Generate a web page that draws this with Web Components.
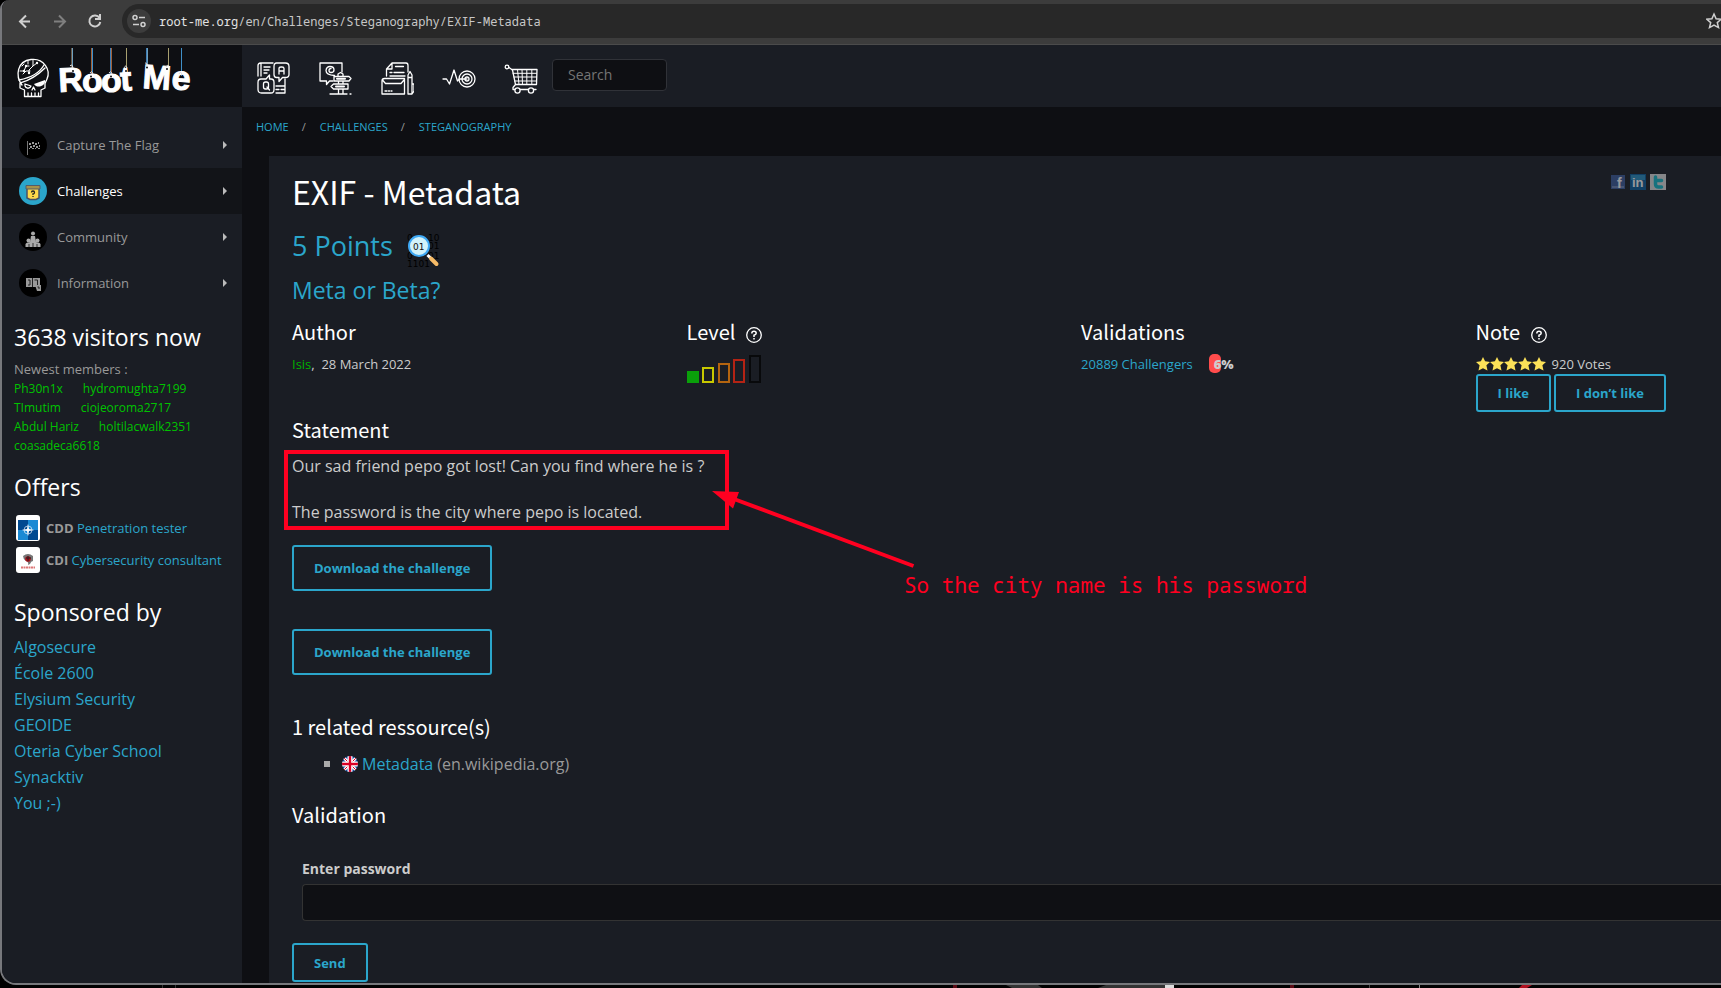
<!DOCTYPE html>
<html lang="en">
<head>
<meta charset="utf-8">
<title>EXIF - Metadata</title>
<style>
  html, body { margin: 0; background: #000; }
  body {
    font-family: "Open Sans", "Noto Sans", sans-serif;
    --link: #2ba6cb; --panel: #1a1d24; --deep: #0e0f13; --muted: #999; --text: #ccc; --green: #00c400;
    --heading-font: "Noto Sans CJK SC", "Open Sans", sans-serif;
    --mono: "Noto Sans Mono", "DejaVu Sans Mono", monospace;
  }
</style>
</head>
<body>
<desktop-window>
  <browser-bar slot="bar">root-me.org<span>/en/Challenges/Steganography/EXIF-Metadata</span></browser-bar>
  <site-logo slot="logo"></site-logo>
  <site-header slot="header"></site-header>
  <side-bar slot="side">
    <nav-item slot="nav" icon="flag">Capture The Flag</nav-item>
    <nav-item slot="nav" icon="chest" active>Challenges</nav-item>
    <nav-item slot="nav" icon="people">Community</nav-item>
    <nav-item slot="nav" icon="info">Information</nav-item>
  </side-bar>
  <crumb-trail></crumb-trail>
  <challenge-card></challenge-card>
</desktop-window>

<script>
const define = (name, html, setup) => {
  const tpl = document.createElement('template');
  tpl.innerHTML = html;
  customElements.define(name, class extends HTMLElement {
    constructor() {
      super();
      this.attachShadow({ mode: 'open' }).append(tpl.content.cloneNode(true));
    }
    connectedCallback() { if (setup) setup(this, this.shadowRoot); }
  });
};

/* Window frame, with the wallpaper showing below it */
define('desktop-window', `
<style>
  :host { display: flex; flex-direction: column; min-height: 100vh; overflow: hidden; }
  .frame { flex: 1; display: flex; flex-direction: column; overflow: hidden; box-sizing: border-box;
    border-left: 2px solid #77787c; border-bottom: 2px solid #77787c; border-radius: 9px 0 0 16px; background: var(--deep); }
  .page { flex: 1; display: grid; grid-template-columns: 240px minmax(0, 1fr); grid-template-rows: 62px 1fr; }
  main { min-width: 0; display: flex; flex-direction: column; }
  .wall { display: block; width: 100%; height: 3px; }
</style>
<div class="frame">
  <slot name="bar"></slot>
  <div class="page">
    <slot name="logo"></slot>
    <slot name="header"></slot>
    <slot name="side"></slot>
    <main><slot></slot></main>
  </div>
</div>
<svg class="wall" viewBox="0 0 1721 3" preserveAspectRatio="none" aria-hidden="true">
  <rect width="1721" height="3" fill="#000"/>
  <path d="M162 0h1v3h-1zM175 0h1v3h-1z" fill="#333"/>
  <path d="M953 0h4v3h-4zM1290 0h4v3h-4z" fill="#5a0a14"/>
  <path d="M1006 0h32l4 3h-30zM1106 0h59v3h-67z" fill="#333"/>
  <path d="M1165 0h9v3h-9z" fill="#ddd"/>
  <path d="M1369 0h1v3h-1z" fill="#444"/><path d="M1419 0h1v3h-1z" fill="#888"/>
  <path d="M1522 0h10l-5 3h-8z" fill="#b01020"/>
</svg>`);

define('browser-bar', `
<style>
  :host { display: flex; align-items: center; height: 44px; box-sizing: content-box; background: #3c3c3c; border-bottom: 1px solid #4b4b4b; padding-left: 11px; font: 12px/20px var(--mono); color: #e3e3e3; }
  nav { display: flex; gap: 11px; margin-right: 15px; }
  button { display: block; border: 0; background: none; padding: 0; width: 24px; height: 24px; }
  svg { display: block; fill: none; stroke: #d0d0d0; stroke-width: 2; }
  .dim { opacity: .45; }
  .pill { flex: 1; height: 34px; display: flex; align-items: center; gap: 8px; background: #282828; border-radius: 17px 0 0 17px; padding-left: 5px; margin-bottom: 2px; }
  .pill button { background: #3c3c3c; border-radius: 50%; }
  .url { flex: 1; padding-top: 1px; }
  ::slotted(span) { color: #c7c7c7; }
  .pill .star { background: none; border-radius: 0; width: 15px; overflow: hidden; }
</style>
<nav>
  <button aria-label="Back"><svg width="24" height="24" viewBox="0 0 24 22"><path d="M14 4.500L8 10.500l6 6M8 10.500H18" transform="translate(-1 0)"/></svg></button>
  <button aria-label="Forward" class="dim"><svg width="24" height="24" viewBox="0 0 24 22"><path d="M11 4.500l6 6-6 6M17 10.500H6"/></svg></button>
  <button aria-label="Reload"><svg width="24" height="24" viewBox="0 0 24 22"><path d="M16.500 7A5.500 5.500 0 1 0 17.300 11M17 3v5h-5"/></svg></button>
</nav>
<div class="pill">
  <button aria-label="Site information"><svg width="24" height="24" viewBox="0 0 24 24" style="stroke-width:1.500"><circle cx="8" cy="8.500" r="2"/><path d="M12 8.500h6M6 15.500h6"/><circle cx="16" cy="15.500" r="2"/></svg></button>
  <span class="url"><slot></slot></span>
  <button class="star" aria-label="Bookmark"><svg width="16" height="24" viewBox="0 0 16 24" style="stroke-width:1.500"><path d="M8 5l2.100 4.700 5.100.5-3.900 3.400 1.200 5L8 16l-4.500 2.600 1.200-5L.8 10.200l5.100-.5z"/></svg></button>
</div>`);

define('site-logo', `
<style>
  :host { display: block; background: #0e0f13; }
  a { display: block; } svg { display: block; }
</style>
<a href="#" aria-label="Root Me">
<svg width="240" height="62" viewBox="2 45 240 62">
  <g fill="none" stroke="#fff" stroke-width="1.300" stroke-linejoin="round" stroke-linecap="round">
    <path d="M22 85C15 76 17 61 31 59.500C44 58 51 70 47 79L45 83.500V88l-4 2v6.500H24.500V90L20 88V83C23 82 33 80 45 68"/>
    <path d="M19 80C29 78 39 74 44 65"/>
    <path d="M23 74l3-3h4M20 71h4l2-5h3M28 64v-3M33 60v6l-4 4v3M33 66l4-3M22 66l2-2" stroke-width="1"/>
    <path d="M28 96v-3M31.500 96v-3M35 96v-3M38.500 96v-3M32 90l1.500-3 1.500 3"/>
    <path d="M25 84l6 2c-1 3-5 3-6 0z"/>
  </g>
  <path d="M34 84l11-4c1 6-8 9-11 4z" fill="#fff"/>
  <g fill="#fff"><circle cx="26" cy="66" r="1.200"/><circle cx="29" cy="73" r="1.200"/><circle cx="24" cy="71" r="1.200"/><circle cx="37" cy="63" r="1.200"/></g>
  <g stroke-width="1">
    <path d="M72.500 48v22M147.500 48v20" stroke="#6fa0bd"/><path d="M92.500 48v28M181.500 48v28" stroke="#3f8fc8"/><path d="M91.500 48v28M111.500 48v28" stroke="#a06038"/><path d="M110.500 48v28M146.500 48v20" stroke="#3f7fb8"/>
    <path d="M126.500 48v22M168.500 48v20" stroke="#a8a070"/><path d="M71.500 48v20" stroke="#6a5848"/>
  </g>
  <text font-family="Liberation Sans, sans-serif" font-weight="700" font-size="34" fill="#fff" stroke="#fff" stroke-width="1" x="59 82 101 121 131 142 171" y="92 92 92 91 91 88 89" rotate="-3 0 0 -4 0 4 4">Root Me</text>
  <g fill="#0e0f13"><circle cx="73" cy="71" r="1"/><circle cx="91" cy="76.500" r="1"/><circle cx="111" cy="76.500" r="1"/><circle cx="126" cy="71" r="1"/><circle cx="147" cy="67.500" r="1"/><circle cx="167" cy="69" r="1"/></g>
  <g fill="none" stroke="#ddd"><path d="M70 66q2-3 3 2M90 73q2-3 3 1M109 73q2-3 3 1M124 68q2-4 3 0M145 63q2-1 2 3M166 67q1-3 3-1M179 74q2-4 3 1"/></g>
</svg></a>`);

define('site-header', `
<style>
  :host { display: flex; align-items: center; background: var(--panel); padding-left: 14px; }
  nav { display: flex; gap: 28px; }
  a { display: block; width: 34px; }
  svg { display: block; width: 34px; height: 34px; margin-top: 3px; fill: none; stroke: #fff; stroke-width: 1.300; stroke-linejoin: round; stroke-linecap: round; }
  input { width: 115px; height: 32px; box-sizing: border-box; margin: 14px 0 0 14px; padding: 0 15px 2px; border: 1px solid #303238; border-radius: 4px; background: var(--deep); color: var(--text); font: 14px "Open Sans", sans-serif; align-self: flex-start; }
  input::placeholder { color: #757575; opacity: 1; }
</style>
<nav>
  <a href="#" aria-label="Questions and answers"><svg viewBox="0 0 34 34">
    <path d="M2 15V4.500Q2 2 4.500 2H17M5 2v13M8 6h6M8 9h5M8 12h3M29 18v14M20 32h9M20 25h9M20 28.500h3M25 28.500h4"/>
    <path d="M20.500 2h9q3.500 0 3.500 3.500v8q0 3-3.500 3h-3L23 20.500v-4h-2.500q-2.500 0-2.500-3V5.500Q18 2 20.500 2z"/>
    <path d="M23 13V7.500Q23 6 25 6h1q2 0 2 1.500V13M23 10h5"/>
    <path d="M5 18h5l3.500-4V18H15q3 0 3 3.500v7q0 3.500-3 3.500H5.500Q2 32 2 28.500v-7Q2 18 5 18z"/>
    <rect x="7.500" y="21" width="5" height="7" rx="2"/><path d="M11 26l2.500 3"/></svg></a>
  <a href="#" aria-label="Guide"><svg viewBox="0 0 34 34">
    <path d="M15 20H11.500L8.500 23.500V20H2V2H24V11"/>
    <path d="M16.500 14.500Q8 14 8 9.500 8.500 5.500 12 5.500q4 0 4 3.500 0 2.500-3 2.500-2 0-2-2t2-2"/>
    <path d="M16 15.500h15l2 2-2 2.500H16zM30 23H15.500L13 25.500l2.500 2.500H30zM20 15v-2l2.500-1.500L25 13v2M20.500 20v3M25 20v3M20.500 28v5M25 28v5M12 33h17M32 33h1"/>
    <path d="M19 17.800h8M18 25.500h8" stroke-width="2"/></svg></a>
  <a href="#" aria-label="Documentation"><svg viewBox="0 0 34 34">
    <path d="M6.500 15V8L12 2h14q2 0 2 2.500V11M12 2v6H6.500M15.500 5.500h8M10 11.500h2M14 11.500h10M10 15h15"/>
    <path d="M24.500 17.500V33H2V20q0-2.500 2.500-2.500zM2.500 19l3 3.500h15.500l3-3.500M5 30h2M8.500 30h1M11 30h1"/>
    <path d="M28 14l2-3.500 2 3.500V33h-4zM28 16.500h4M32 23h2v7l-2 3"/></svg></a>
  <a href="#" aria-label="Monitoring"><svg viewBox="0 0 34 34">
    <path d="M1 18h3.500l3 5L12 9l3.500 11 2-2H25"/>
    <circle cx="25" cy="18" r="8"/><circle cx="25" cy="18" r="5"/><circle cx="25" cy="18" r="2"/></svg></a>
  <a href="#" aria-label="Shop"><svg viewBox="0 0 34 34">
    <circle cx="3" cy="6" r="1.800"/><path d="M5 6.500L8.500 9l3 14.500L9 26.500v2h23M7.500 8.500H33L32.500 23.500H11.500"/>
    <path d="M9 12.300h23.500M10 16h22.500M10.500 20h22M13.500 8.500l1.500 15M18 8.500l.5 15M22.800 8.500v15M27.800 8.500v15" stroke-width="1"/>
    <circle cx="13.500" cy="29.500" r="2.600" fill="#1a1d24"/><circle cx="27" cy="29.500" r="2.600" fill="#1a1d24"/></svg></a>
</nav>
<input type="search" placeholder="Search" aria-label="Search">`);

const navIcons = {
  flag: '<circle cx="14" cy="14" r="14" fill="#000"/><path d="M8.500 10v14" stroke="#777"/><g fill="#999"><path d="M10 12h2v2h-2zM13 11h2v2h-2zM16 12h2v2h-2zM19 11h1v2h-1zM11 15h2v2h-2zM14 14h2v2h-2zM17 15h2v2h-2zM20 14h1v2h-1zM10 17h1v1h-1zM13 17h2v1h-2zM16 17h1v1h-1zM19 17h2v1h-2z"/></g>',
  chest: '<circle cx="14" cy="14" r="14" fill="#2ba6cb"/><path d="M8 11h12v10l-3 1.500h-6L8 21z" fill="#ffd84a" stroke="#4a5266" stroke-width="1.500"/><path d="M7 8.500h14v3.500H7z" fill="#a8924a" stroke="#555c68"/><path d="M12.500 15.500q0-1.500 1.500-1.500t1.500 1.500-1.500 1.500v1M14 19v1" stroke="#222" stroke-width="1.300" fill="none"/>',
  people: '<circle cx="14" cy="14" r="14" fill="#000"/><g fill="#aaa"><circle cx="14" cy="10.500" r="2"/><path d="M12 13h4l1 6h-6z"/><circle cx="9.500" cy="17.500" r="2"/><circle cx="18.500" cy="17.500" r="2"/><path d="M6.500 21q1-2 3-1.500L14 18l4.500 1.500q2-.5 3 1.500v3h-15z"/></g><path d="M10 21v3M14 20v4M18 21v3" stroke="#333"/>',
  info: '<circle cx="14" cy="14" r="14" fill="#000"/><path d="M7 9h14v9H7z" fill="#999"/><path d="M16 16h6v6h-4z" fill="#999"/><path d="M9 11h2v5H9M13.500 9v9M15.500 11h3v5" stroke="#222" fill="none"/><path d="M18.500 18h1.500v2" stroke="#222" fill="none"/>'
};
define('nav-item', `
<style>
  :host { display: block; }
  :host([active]) { background: #121418; }
  a { display: flex; align-items: center; height: 46px; padding: 0 15px 0 17px; gap: 10px; font-size: 13px; color: #999; text-decoration: none; }
  :host([active]) a { color: #fff; }
  span { flex: 1; }
  .arrow { width: 4px; height: 8px; background: #bbb; clip-path: polygon(0 0, 100% 50%, 0 100%); }
</style>
<a href="#"><svg width="28" height="28" viewBox="0 0 28 28" aria-hidden="true"></svg><span><slot></slot></span><i class="arrow"></i></a>`,
(el, root) => { root.querySelector('svg').innerHTML = navIcons[el.getAttribute('icon')]; });

define('side-bar', `
<style>
  :host { display: block; background: var(--panel); padding-top: 15px; color: var(--muted); }
  section { padding: 0 12px; }
  h2 { margin: 15px 0 0; font: 23px/32px "Open Sans", sans-serif; color: #fff; }
  a { color: var(--link); text-decoration: none; }
  .new { margin: 7px 0 0; font-size: 13px; line-height: 19px; }
  .members { font-size: 12px; line-height: 19px; white-space: nowrap; }
  .members div { display: flex; gap: 20px; }
  .members a { color: var(--green); }
  .offer { display: flex; align-items: center; gap: 6px; height: 26px; margin: 0 0 6px 2px; font-size: 13px; white-space: nowrap; }
  .offers { margin-top: 12px; }
  .offer svg { background: #fff; border-radius: 3px; }
  .jobs h2 { margin-top: 16px; }
  .sponsors h2 { margin-top: 23px; }
  ul { list-style: none; margin: 6px 0 0; padding: 0; font-size: 16px; line-height: 26px; }
</style>
<nav aria-label="Main"><slot name="nav"></slot></nav>
<section>
  <h2>3638 visitors now</h2>
  <p class="new">Newest members :</p>
  <div class="members">
    <div><a href="#">Ph30n1x</a><a href="#">hydromughta7199</a></div>
    <div><a href="#">TImutim</a><a href="#">ciojeoroma2717</a></div>
    <div><a href="#">Abdul Hariz</a><a href="#">holtilacwalk2351</a></div>
    <div><a href="#">coasadeca6618</a></div>
  </div>
</section>
<section class="jobs">
  <h2>Offers</h2>
  <div class="offers">
    <div class="offer">
      <svg width="24" height="26" viewBox="0 0 24 26" aria-hidden="true"><path fill="#004990" d="M2 5h20v20H2z"/><path fill="#1a8ad4" d="M12 5h10v10H12zM2 15h10v10H2z"/><circle cx="12" cy="15" r="4" fill="none" stroke="#fff" stroke-width=".6"/><path d="M12 8.500l1 5.500 5.500 1-5.500 1-1 5.500-1-5.500-5.500-1 5.500-1z" fill="#fff"/></svg>
      <span><b>CDD</b> <a href="#">Penetration tester</a></span>
    </div>
    <div class="offer">
      <svg width="24" height="26" viewBox="0 0 24 26" aria-hidden="true"><path d="M7 9q5-4 10 0v5q-2 0-3 3l-2 1q1-3-2-4-3-2-3-5z" fill="#777"/><circle cx="12" cy="12" r="2.800" fill="#b00d18"/><path d="M10 11h5M12 9v5" stroke="#222"/><path d="M5 20.500h14" stroke="#d77" stroke-width="2" stroke-dasharray="2 .5"/></svg>
      <span><b>CDI</b> <a href="#">Cybersecurity consultant</a></span>
    </div>
  </div>
</section>
<section class="sponsors">
  <h2>Sponsored by</h2>
  <ul>
    <li><a href="#">Algosecure</a></li><li><a href="#">École 2600</a></li><li><a href="#">Elysium Security</a></li><li><a href="#">GEOIDE</a></li><li><a href="#">Oteria Cyber School</a></li><li><a href="#">Synacktiv</a></li><li><a href="#">You ;-)</a></li>
  </ul>
</section>`);

define('crumb-trail', `
<style>
  :host { display: block; padding: 10px 14px 19px; font-size: 11px; line-height: 20px; color: #999; }
  nav { display: flex; gap: 13px; }
  span { margin-right: 1px; }
  a { color: var(--link); text-decoration: none; }
</style>
<nav aria-label="Breadcrumb"><a href="#">HOME</a><span>/</span><a href="#">CHALLENGES</a><span>/</span><a href="#">STEGANOGRAPHY</a></nav>`);

const buttonCss = `
  :host { display: inline-block; vertical-align: top; }
  button, a { box-sizing: border-box; display: flex; align-items: center; justify-content: center; height: var(--h, 38px); margin: 0; padding: 0 20px; border: 2px solid var(--link); border-radius: 3px; background: none; color: var(--link); font: 700 13px "Open Sans", sans-serif; text-decoration: none; white-space: nowrap; }`;
define('action-button', `<style>${buttonCss}</style><button type="button"><slot></slot></button>`);
define('download-link', `<style>${buttonCss} a { height: 46px; }</style><a href="#"><slot></slot></a>`);

define('help-mark', `
<style>:host { display: block; } svg { display: block; }</style>
<svg width="16" height="16" viewBox="0 0 16 16" role="img" aria-label="Help" fill="none" stroke="#fff" stroke-width="1.300"><circle cx="8" cy="8" r="7.300"/><path d="M5.800 6.500Q5.800 4.300 8 4.300t2.200 1.900Q10.200 7.300 8 8.300V10M8 11v1.500" stroke-width="1.500"/></svg>`);

/* One of the four facts about the challenge: a title and what stands below it */
define('fact-column', `
<style>
  :host { display: block; font-size: 13px; line-height: 20px; color: var(--text); }
  header { display: flex; align-items: center; gap: 11px; height: 28px; margin-bottom: 8px; }
  h3 { margin: 0; font: 20px/28px var(--heading-font); color: #fff; }
  ::slotted(help-mark) { margin-top: 6px; }
</style>
<header><h3><slot name="title"></slot></h3><slot name="help"></slot></header>
<slot></slot>`);

define('level-bars', `
<style>:host { display: block; padding-top: 1px; } svg { display: block; }</style>
<svg width="75" height="28" viewBox="0 0 75 28" role="img" aria-label="Very easy" fill="none" stroke-width="2">
  <path fill="#0aa00a" d="M0 16h12v12H0z"/><path stroke="#c8c800" d="M16 13h10v14H16z"/><path stroke="#b4640f" d="M32 9h10v18H32z"/><path stroke="#b42314" d="M47 5h10v22H47z"/><path stroke="#08090b" d="M63 1h10v26H63z"/>
</svg>`);

define('star-rating', `
<style>:host { display: block; } svg { display: block; }</style>
<svg width="70" height="14" viewBox="0 0 70 14" role="img" aria-label="5 of 5"></svg>`,
(el, root) => {
  root.querySelector('svg').innerHTML = [0, 1, 2, 3, 4].map(i =>
    `<path transform="translate(${i * 14} 0)" fill="#fbe158" d="M7 0l2.100 4.200 4.900.7-3.600 3.400 1.100 5.200L7 11.200l-4.500 2.300 1.100-5.200L0 4.900l4.900-.7z"/>`).join('');
});

define('share-links', `
<style>
  :host { display: flex; gap: 4px; opacity: .55; align-items: center; }
  a { display: block; } svg { display: block; }
  text { font-family: "Liberation Sans", sans-serif; font-weight: 700; }
</style>
<a href="#"><svg width="15" height="16" viewBox="0 0 15 16"><path fill="#3b5998" d="M0 1h14v14H0z"/><path fill="#6d84b4" d="M1 12h12v2H1z"/><text x="6" y="14" font-size="14" fill="#fff">f</text></svg></a>
<a href="#"><svg width="16" height="16" viewBox="0 0 16 16"><path fill="#0b5c99" d="M0 0h16v16H0z"/><path fill="#2a8cc0" d="M1 1h14v5H1z"/><text x="2" y="13" font-size="13" fill="#fff">in</text></svg></a>
<a href="#" aria-label="Twitter"><svg width="16" height="16" viewBox="0 0 16 16"><path fill="#ddd" d="M0 0h16v16H0z"/><path d="M5.500 3v7q0 3 3 3h3M5.500 6.500h6" fill="none" stroke="#16b8c8" stroke-width="3.500" stroke-linecap="round"/></svg></a>`);

/* Red box, arrow and remark drawn over the statement */
define('red-note', `
<style>
  :host { position: absolute; left: -8px; top: -5px; pointer-events: none; }
  svg { display: block; overflow: visible; }
  p { position: absolute; left: 620px; top: 121px; margin: 0; font: 21px/28px var(--mono); color: #ff0020; white-space: nowrap; }
</style>
<svg width="445" height="80" viewBox="0 0 445 80" aria-hidden="true"><rect x="2" y="2" width="441" height="76" fill="none" stroke="#ff0020" stroke-width="4"/><path d="M450 49L629.500 116" stroke="#ff0020" stroke-width="4"/><path d="M428 41l27 1-6 16.500z" fill="#ff0020"/></svg>
<p><slot></slot></p>`);

define('challenge-card', `
<style>
  :host { display: block; flex: 1; box-sizing: border-box; margin-left: 27px; padding: 11px 55px 0 23px; background: var(--panel); color: var(--text); }
  h1, h2, h3, p { margin: 0; font-weight: 400; }
  .top { display: flex; justify-content: space-between; }
  h1 { font: 32px/48px var(--heading-font); color: #fff; }
  share-links { height: 16px; margin-top: 7px; }
  h2 { font-size: 27px; line-height: 42px; color: var(--link); display: flex; align-items: flex-end; gap: 14px; margin-top: 10px; }
  .sub { font-size: 23px; line-height: 32px; color: var(--link); margin-top: 7px; }
  .facts { display: grid; grid-template-columns: repeat(3, minmax(0, 1fr)) auto; margin: 12px 0 4px; }
  h3 { font: 20px/28px var(--heading-font); color: #fff; }
  a { color: var(--link); text-decoration: none; }
  .author { color: #00b000; }
  .valid { display: flex; gap: 16px; align-items: center; }
  .pct { display: grid; font-weight: 700; }
  .pct > * { grid-area: 1 / 1; }
  .pct i { width: 12px; height: 19px; border-radius: 5px; background: #ff4c4c; }
  .pct b { padding-left: 5px; }
  .votes { display: flex; gap: 6px; align-items: center; height: 20px; }
  .likes { display: flex; gap: 3px; }
  .statement { position: relative; margin: 11px 0 21px; font-size: 16px; line-height: 23px; }
  .statement p + p { margin-top: 23px; }
  .downloads { display: flex; flex-direction: column; align-items: flex-start; gap: 38px; margin-bottom: 38px; }
  ul { margin: 11px 0 25px; padding: 0 0 0 32px; list-style: none; font-size: 16px; line-height: 24px; color: var(--muted); }
  li { display: flex; align-items: center; }
  li::before { content: ""; width: 6px; height: 6px; background: #aaa; margin-right: 12px; }
  li svg { margin-right: 4px; }
  li span { margin-left: 4px; }
  form { margin: 30px 0 0; }
  .field { display: block; margin: 0 -55px 22px 10px; }
  label { display: block; font-size: 14px; font-weight: 700; line-height: 20px; margin-bottom: 5px; }
  input { display: block; width: 100%; height: 37px; box-sizing: border-box; padding: 0 8px; border: 1px solid #333; border-right: 0; border-radius: 4px 0 0 4px; background: #0f1014; color: #ccc; font: 14px "Open Sans", sans-serif; }
  .send { --h: 39px; }
</style>
<div class="top"><h1>EXIF - Metadata</h1><share-links></share-links></div>
<h2>5 Points
  <svg width="33" height="33" viewBox="0 0 33 33" aria-hidden="true" font-family="DejaVu Sans, sans-serif" font-size="9">
    <g fill="#000"><text x="0" y="7">0</text><text x="21" y="7">10</text><text x="21" y="15">01</text><text x="0" y="25">0</text><text x="21" y="25">01</text><text x="0" y="32.500">1101</text></g>
    <path d="M20.500 21l3 3" stroke="#fff" stroke-width="3"/><path d="M24 24.500l5.500 5.500" stroke="#f6bb67" stroke-width="4" stroke-linecap="round"/>
    <circle cx="12" cy="12" r="10" fill="#d2f3fb" stroke="#3fa9f5" stroke-width="2"/><text x="6" y="15.500" fill="#111">01</text>
  </svg>
</h2>
<p class="sub">Meta or Beta?</p>
<div class="facts">
  <fact-column><span slot="title">Author</span><a class="author" href="#">Isis</a>,&nbsp; 28 March 2022</fact-column>
  <fact-column><span slot="title">Level</span><help-mark slot="help"></help-mark><level-bars></level-bars></fact-column>
  <fact-column><span slot="title">Validations</span><div class="valid"><a href="#">20889 Challengers</a><span class="pct"><i></i><b>6%</b></span></div></fact-column>
  <fact-column><span slot="title">Note</span><help-mark slot="help"></help-mark>
    <div class="votes"><star-rating></star-rating><span>920 Votes</span></div>
    <div class="likes"><action-button>I like</action-button><action-button>I don’t like</action-button></div></fact-column>
</div>
<h3>Statement</h3>
<div class="statement">
  <p>Our sad friend pepo got lost! Can you find where he is ?</p>
  <p>The password is the city where pepo is located.</p>
  <red-note>So the city name is his password</red-note>
</div>
<div class="downloads"><download-link>Download the challenge</download-link><download-link>Download the challenge</download-link></div>
<h3>1 related ressource(s)</h3>
<ul><li>
  <svg width="16" height="16" viewBox="0 0 16 16" aria-hidden="true"><defs><clipPath id="round"><circle cx="8" cy="8" r="8"/></clipPath></defs><g clip-path="url(#round)"><path fill="#1a4fa0" d="M0 0h16v16H0z"/><path d="M0 0l16 16M16 0L0 16" stroke="#fff" stroke-width="3"/><path d="M0 0l16 16M16 0L0 16" stroke="#d80027"/><path d="M8 0v16M0 8h16" stroke="#fff" stroke-width="5"/><path d="M8 0v16M0 8h16" stroke="#d80027" stroke-width="2.400"/></g></svg>
  <a href="#">Metadata</a><span>(en.wikipedia.org)</span></li></ul>
<h3>Validation</h3>
<form>
  <div class="field"><label for="pass">Enter password</label><input id="pass" type="text"></div>
  <action-button class="send">Send</action-button>
</form>`);
</script>
</body>
</html>
